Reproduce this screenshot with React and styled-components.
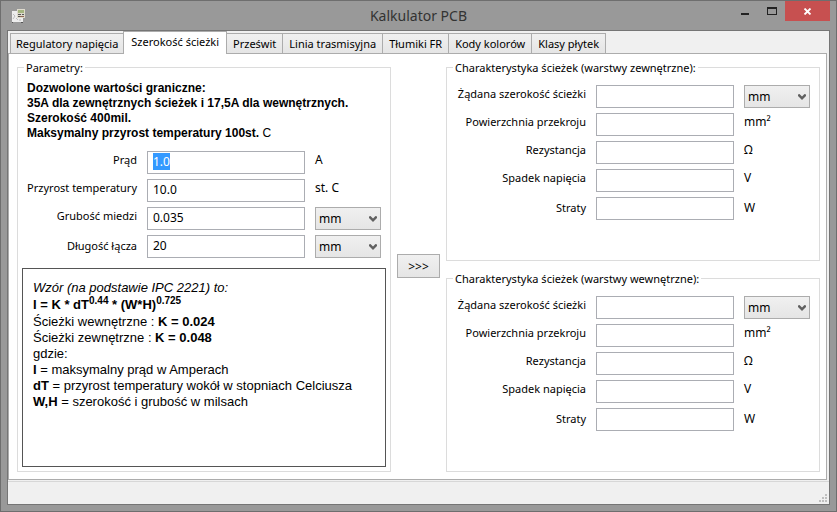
import React, { useEffect, useRef, useState } from "react";
import styled, { createGlobalStyle, css } from "styled-components";

const GlobalStyle = createGlobalStyle`
  *, *::before, *::after { box-sizing: border-box; }
  body {
    margin: 0;
    background: #999999;
    color: #000000;
    font: 11px/15px "Noto Sans", "Open Sans", sans-serif;
  }
  button, input, select { font: inherit; color: inherit; margin: 0; }
`;

const Window = styled.div`
  display: flex;
  flex-direction: column;
  min-height: 100vh;
  padding: 0 6px 6px;
  border: 1px solid #6e6e6e;
  background: #999999;
`;

const TitleBar = styled.header`
  display: grid;
  grid-template-columns: 1fr auto 1fr;
  align-items: center;
  height: 29px;
`;

const AppIcon = styled.svg`
  margin-left: 4px;
`;

const Title = styled.h1`
  margin: 0;
  font-size: 14px;
  line-height: 20px;
  font-weight: 400;
  color: #333333;
`;

const WindowButtons = styled.div`
  display: flex;
  justify-content: flex-end;
  align-self: start;
`;

const WindowButton = styled.button`
  display: grid;
  place-items: center;
  width: ${(p) => (p.$close ? 45 : 27)}px;
  height: 20px;
  padding: ${(p) => (p.$close ? "1px 0 0" : 0)};
  border: 0;
  background: ${(p) => (p.$close ? "#c75050" : "transparent")};
`;

const Client = styled.main`
  display: flex;
  flex: 1;
  flex-direction: column;
  border: 1px solid #757575;
  background: #f0f0f0;
`;

const TabStrip = styled.div`
  display: flex;
  align-items: flex-end;
  height: 22px;
  padding-left: 2px;
`;

const Tab = styled.button`
  position: relative;
  height: 20px;
  margin: 0 0 0 -1px;
  padding: 0 6px;
  border: 1px solid #acacac;
  border-bottom: 0;
  background: linear-gradient(#f0f0f0, #e5e5e5);
  white-space: nowrap;

  &:first-child {
    margin-left: 0;
    padding: 0 5px;
  }

  ${(p) =>
    p.$active &&
    css`
      z-index: 1;
      height: 23px;
      margin-bottom: -1px;
      padding: 0 7px 3px;
      background: #ffffff;
    `}
`;

const Pane = styled.section`
  display: grid;
  flex: 1;
  grid-template-columns: 1fr auto 1fr;
  gap: 6px;
  margin-right: 2px;
  padding: 6px 6px 7px 8px;
  border: 1px solid #acacac;
  background: #ffffff;
`;

const RightColumn = styled.div`
  display: flex;
  flex-direction: column;
  gap: 10px;
`;

const Group = styled.fieldset`
  display: flex;
  flex: 1;
  flex-direction: column;
  min-width: 0;
  margin: 0;
  padding: 0;
  border: 1px solid #dcdcdc;
`;

const GroupTitle = styled.legend`
  margin-left: 6px;
  padding: 0 2px;
  white-space: nowrap;
`;

const Notice = styled.p`
  margin: 6px 9px 0;
  font: 700 12px/15px "Liberation Sans", Arial, sans-serif;

  span { font-weight: 400; }
`;

const Fields = styled.div`
  display: flex;
  flex-direction: column;
  gap: 5px;
  padding: 10px 9px;
`;

const Row = styled.div`
  display: grid;
  grid-template-columns: ${(p) => p.$labelWidth}px 1fr 66px;
  column-gap: 10px;
  height: 23px;
`;

const Label = styled.label`
  align-self: start;
  padding-top: 1px;
  text-align: right;
  white-space: nowrap;

  ${Row}:last-child > & { padding-top: 3px; }
`;

const Unit = styled.span`
  padding-top: 1px;
  font-size: 12px;

  ${Row}:last-child > & { padding-top: 3px; }
`;

const TextBox = styled.input`
  width: 100%;
  min-width: 0;
  height: 23px;
  padding: 0 5px 2px;
  border: 1px solid #abadb3;
  border-radius: 0;
  background: #ffffff;
  font-size: 12px;
  outline: none;

  &::selection { background: #3399ff; color: #ffffff; }
`;

const SelectFrame = styled.div`
  position: relative;
  height: 23px;

  svg {
    position: absolute;
    right: 4px;
    top: 9px;
    pointer-events: none;
  }
`;

const Select = styled.select`
  width: 100%;
  height: 23px;
  padding: 0 16px 0 3px;
  appearance: none;
  border: 1px solid #acacac;
  border-radius: 0;
  background: linear-gradient(#f0f0f0, #e5e5e5);
  font-size: 12px;
`;

const CalculateButton = styled.button`
  align-self: center;
  width: 43px;
  height: 24px;
  padding: 0;
  border: 1px solid #acacac;
  background: linear-gradient(#f0f0f0, #e5e5e5);
  font-size: 12px;
`;

const Formula = styled.div`
  flex: 1;
  margin: 0 4px 4px;
  padding: 11px 10px;
  border: 1px solid #555555;
  font: 13px/16px "Liberation Sans", Arial, sans-serif;

  p { margin: 0; }
  sup { font-size: 10px; line-height: 0; }
`;

const Equation = styled.p`
  font-weight: 700;
  line-height: 18px;
`;

const StatusBar = styled.footer`
  display: flex;
  align-items: flex-end;
  justify-content: flex-end;
  height: 23px;
  margin-top: 1px;
  padding: 0 2px 2px;
  border-top: 1px solid #d7d7d7;
`;

const TABS = [
  "Regulatory napięcia",
  "Szerokość ścieżki",
  "Prześwit",
  "Linia trasmisyjna",
  "Tłumiki FR",
  "Kody kolorów",
  "Klasy płytek",
];

const PARAMETERS = [
  { id: "current", label: "Prąd", value: "1.0", unit: "A", selected: true },
  { id: "rise", label: "Przyrost temperatury", value: "10.0", unit: "st. C" },
  { id: "copper", label: "Grubość miedzi", value: "0.035", select: true },
  { id: "length", label: "Długość łącza", value: "20", select: true },
];

const RESULTS = [
  { id: "width", label: "Żądana szerokość ścieżki", select: true },
  { id: "area", label: "Powierzchnia przekroju", unit: "mm²" },
  { id: "resistance", label: "Rezystancja", unit: "Ω" },
  { id: "drop", label: "Spadek napięcia", unit: "V" },
  { id: "loss", label: "Straty", unit: "W" },
];

function UnitSelect({ label }) {
  return (
    <SelectFrame>
      <Select aria-label={`${label} – jednostka`} defaultValue="mm">
        <option>mm</option>
        <option>mil</option>
      </Select>
      <svg width="8" height="6" viewBox="0 0 8 6" aria-hidden="true">
        <path d="M0 0.5 1.5 0 4 2.5 6.5 0 8 0.5V2L4 6 0 2Z" fill="#606060" />
      </svg>
    </SelectFrame>
  );
}

function Field({ id, label, value = "", unit, select, selected, labelWidth }) {
  const ref = useRef(null);
  useEffect(() => {
    if (selected) {
      ref.current.focus();
      ref.current.select();
    }
  }, [selected]);
  return (
    <Row $labelWidth={labelWidth}>
      <Label htmlFor={id}>{label}</Label>
      <TextBox id={id} ref={ref} type="text" defaultValue={value} />
      {select ? <UnitSelect label={label} /> : <Unit>{unit}</Unit>}
    </Row>
  );
}

function ResultGroup({ name, title }) {
  return (
    <Group>
      <GroupTitle>{title}</GroupTitle>
      <Fields>
        {RESULTS.map((r) => (
          <Field key={r.id} {...r} id={`${name}-${r.id}`} labelWidth={130} />
        ))}
      </Fields>
    </Group>
  );
}

export default function App() {
  const [active, setActive] = useState(1);
  return (
    <>
      <GlobalStyle />
      <Window>
        <TitleBar>
          <AppIcon width="16" height="16" viewBox="0 0 16 16" aria-hidden="true">
            <path d="M1 3h11v11H1z" fill="#ededed" />
            <path d="M2 6l2 2-2 3M5 10l2 2M8 12h2" fill="none" stroke="#bdbdbd" />
            <path d="M1 14h1v1H1zM10 14h2v1h-2z" fill="#555555" />
            <path d="M6 1h8v9H6z" fill="#dedacd" />
            <path d="M7 2h6v3H7z" fill="#a5b580" />
            <path d="M7 6h3v1H7zM11 6h2v1h-2zM7 8h2v1H7z" fill="#555555" />
            <path d="M9 8h4v1H9z" fill="#8d6856" />
          </AppIcon>
          <Title>Kalkulator PCB</Title>
          <WindowButtons>
            <WindowButton aria-label="Minimalizuj">
              <svg width="10" height="10" viewBox="0 0 10 10">
                <path d="M1 7h8v2H1z" fill="#222222" />
              </svg>
            </WindowButton>
            <WindowButton aria-label="Maksymalizuj">
              <svg width="10" height="8" viewBox="0 0 10 8">
                <path d="M0 0h10v8H0zM1 2v5h8V2z" fill="#222222" fillRule="evenodd" />
              </svg>
            </WindowButton>
            <WindowButton $close aria-label="Zamknij">
              <svg width="9" height="7" viewBox="0 0 9 7">
                <path d="M1.5 0.5 7.5 6.5M7.5 0.5 1.5 6.5" stroke="#ffffff" strokeWidth="1.8" />
              </svg>
            </WindowButton>
          </WindowButtons>
        </TitleBar>
        <Client>
          <TabStrip role="tablist">
            {TABS.map((name, i) => (
              <Tab
                key={name}
                role="tab"
                aria-selected={i === active}
                $active={i === active}
                onClick={() => setActive(i)}
              >
                {name}
              </Tab>
            ))}
          </TabStrip>
          <Pane role="tabpanel" aria-label={TABS[active]}>
            <Group>
              <GroupTitle>Parametry:</GroupTitle>
              <Notice>
                Dozwolone wartości graniczne:
                <br />
                35A dla zewnętrznych ścieżek i 17,5A dla wewnętrznych.
                <br />
                Szerokość 400mil.
                <br />
                Maksymalny przyrost temperatury 100st. <span>C</span>
              </Notice>
              <Fields>
                {PARAMETERS.map((p) => (
                  <Field key={p.id} {...p} labelWidth={110} />
                ))}
              </Fields>
              <Formula>
                <p><i>Wzór (na podstawie IPC 2221) to:</i></p>
                <Equation>I = K * dT<sup>0.44</sup> * (W*H)<sup>0.725</sup></Equation>
                <p>Ścieżki wewnętrzne : <b>K = 0.024</b></p>
                <p>Ścieżki zewnętrzne : <b>K = 0.048</b></p>
                <p>gdzie:</p>
                <p><b>I</b> = maksymalny prąd w Amperach</p>
                <p><b>dT</b> = przyrost temperatury wokół w stopniach Celciusza</p>
                <p><b>W,H</b> = szerokość i grubość w milsach</p>
              </Formula>
            </Group>
            <CalculateButton>&gt;&gt;&gt;</CalculateButton>
            <RightColumn>
              <ResultGroup name="outer" title="Charakterystyka ścieżek (warstwy zewnętrzne):" />
              <ResultGroup name="inner" title="Charakterystyka ścieżek (warstwy wewnętrzne):" />
            </RightColumn>
          </Pane>
          <StatusBar>
            <svg width="8" height="8" viewBox="0 0 8 8" aria-hidden="true">
              <path
                d="M6 0h2v2H6zM3 3h2v2H3zM6 3h2v2H6zM0 6h2v2H0zM3 6h2v2H3zM6 6h2v2H6z"
                fill="#bfbfbf"
              />
            </svg>
          </StatusBar>
        </Client>
      </Window>
    </>
  );
}
